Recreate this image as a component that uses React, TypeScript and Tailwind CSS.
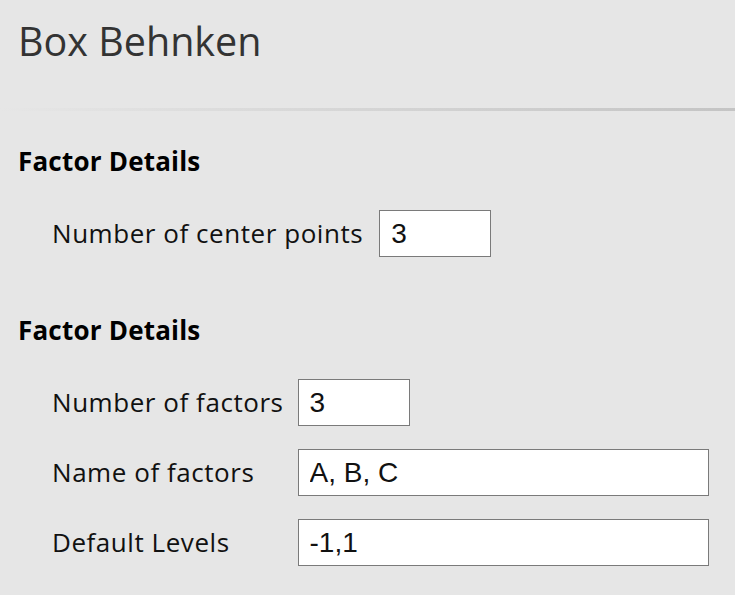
import React from "react";

const labelBase = "text-[26px] tracking-[0.55px] leading-[47px] text-[#111] whitespace-nowrap pl-[34px]";
const labelCls = labelBase + " pr-[16px]";
const labelCls2 = labelBase + " pr-[14px]";
const inputCls =
  "h-[47px] border border-[#7a7a7a] bg-white px-[11px] text-[28px] text-[#111] outline-none";
const inputFont = { fontFamily: '"Liberation Sans", Arial, sans-serif' };

export default function App() {
  return (
    <div
      className="w-full min-h-[595px] bg-[#e6e6e6] overflow-hidden"
      style={{ fontFamily: '"Open Sans", "Noto Sans", sans-serif' }}
    >
      <div className="h-[108px] pl-[18px] pt-[13px]">
        <h1 className="text-[39.5px] leading-[56px] font-normal text-[#333]">Box Behnken</h1>
      </div>
      <div className="h-[3px] bg-gradient-to-r from-[#e6e6e6] to-[#c4c4c4]" />
      <div className="pl-[18px]">
        <h2 className="mt-[34px] text-[26px] tracking-[0.2px] leading-[32px] font-bold text-black">Factor Details</h2>
        <div className="mt-[33px] grid grid-cols-[auto_1fr] items-center">
          <label className={labelCls}>Number of center points</label>
          <input className={inputCls + " w-[112px]"} style={inputFont} defaultValue="3" />
        </div>
        <h2 className="mt-[57px] text-[26px] tracking-[0.2px] leading-[32px] font-bold text-black">Factor Details</h2>
        <div className="mt-[33px] grid grid-cols-[auto_1fr] items-center gap-y-[23px]">
          <label className={labelCls2}>Number of factors</label>
          <input className={inputCls + " w-[112px]"} style={inputFont} defaultValue="3" />
          <label className={labelCls2}>Name of factors</label>
          <input className={inputCls + " w-[411px]"} style={inputFont} defaultValue="A, B, C" />
          <label className={labelCls2}>Default Levels</label>
          <input className={inputCls + " w-[411px]"} style={inputFont} defaultValue="-1,1" />
        </div>
      </div>
    </div>
  );
}
